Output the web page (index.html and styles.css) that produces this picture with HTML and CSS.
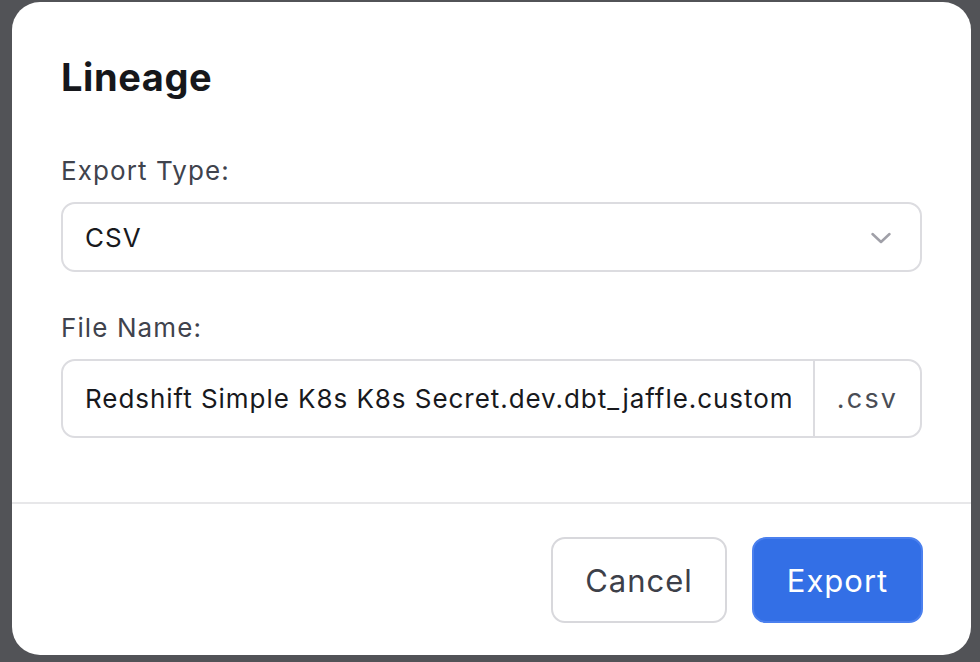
FILE: index.html
```html
<!DOCTYPE html>
<html lang="en">
<head>
<meta charset="utf-8">
<title>Lineage</title>
<link rel="stylesheet" href="styles.css">
</head>
<body>
<div class="backdrop">
  <div class="modal">
    <div class="modal-body">
      <h1 class="title">Lineage</h1>
      <div class="field">
        <label class="label">Export Type:</label>
        <div class="select">
          <span class="select-value">CSV</span>
          <svg class="chevron" width="22" height="12" viewBox="0 0 22 12" aria-hidden="true">
            <path d="M2.5 2 L11 10 L19.5 2" fill="none" stroke="#a0a0a8" stroke-width="2.5" stroke-linecap="round" stroke-linejoin="round"/>
          </svg>
        </div>
      </div>
      <div class="field">
        <label class="label">File Name:</label>
        <div class="input-group">
          <input class="input" type="text" value="Redshift Simple K8s K8s Secret.dev.dbt_jaffle.customers">
          <span class="addon">.csv</span>
        </div>
      </div>
    </div>
    <div class="modal-footer">
      <button class="btn btn-secondary">Cancel</button>
      <button class="btn btn-primary">Export</button>
    </div>
  </div>
</div>
</body>
</html>
```

FILE: styles.css
```css
* { box-sizing: border-box; }
html, body {
  margin: 0;
  padding: 0;
  width: 980px;
  height: 662px;
  overflow: hidden;
  background: #525357;
  font-family: Inter, "Noto Sans", "Liberation Sans", sans-serif;
}
.backdrop {
  padding: 2px 9px 7px 12px;
  height: 662px;
}
.modal {
  width: 959px;
  height: 653px;
  background: #ffffff;
  border-radius: 28px;
  display: flex;
  flex-direction: column;
  overflow: hidden;
}
.modal-body {
  padding: 52px 49px 64px 49px;
  display: flex;
  flex-direction: column;
  border-bottom: 2px solid #e7e7e9;
}
.title {
  margin: 0 0 55px 0;
  font-size: 38px;
  line-height: 46px;
  font-weight: 700;
  color: #16171b;
  letter-spacing: 0.6px;
}
.field {
  display: flex;
  flex-direction: column;
  gap: 15px;
}
.field + .field {
  margin-top: 40px;
}
.label {
  font-size: 26px;
  line-height: 32px;
  color: #40434d;
  letter-spacing: 1.1px;
}
.select {
  height: 70px;
  border: 2px solid #dcdce0;
  border-radius: 14px;
  display: flex;
  align-items: center;
  justify-content: space-between;
  padding: 0 28px 0 22px;
}
.select-value {
  font-size: 26px;
  color: #18191d;
  letter-spacing: 1px;
}
.chevron {
  display: block;
  margin-top: 1px;
}
.input-group {
  height: 79px;
  border: 2px solid #dcdce0;
  border-radius: 14px;
  display: flex;
  overflow: hidden;
}
.input {
  flex: 1;
  min-width: 0;
  border: none;
  outline: none;
  padding: 0 22px 0 22px;
  font-family: inherit;
  font-size: 26px;
  letter-spacing: 0.95px;
  color: #18191d;
  background: transparent;
}
.addon {
  width: 107px;
  border-left: 2px solid #dcdce0;
  display: flex;
  align-items: center;
  justify-content: center;
  font-size: 27px;
  letter-spacing: 2.2px;
  color: #4a4d55;
}
.modal-footer {
  padding: 33px 48px 0 0;
  display: flex;
  justify-content: flex-end;
  gap: 25px;
}
.btn {
  height: 86px;
  border-radius: 14px;
  font-family: inherit;
  font-size: 31px;
  letter-spacing: 1px;
  padding: 0;
  cursor: pointer;
}
.btn-secondary {
  width: 176px;
  background: #ffffff;
  border: 2px solid #d8d8dc;
  color: #3d4049;
}
.btn-primary {
  width: 171px;
  background: #336fe6;
  border: 2px solid #4b80ee;
  color: #ffffff;
}
```
